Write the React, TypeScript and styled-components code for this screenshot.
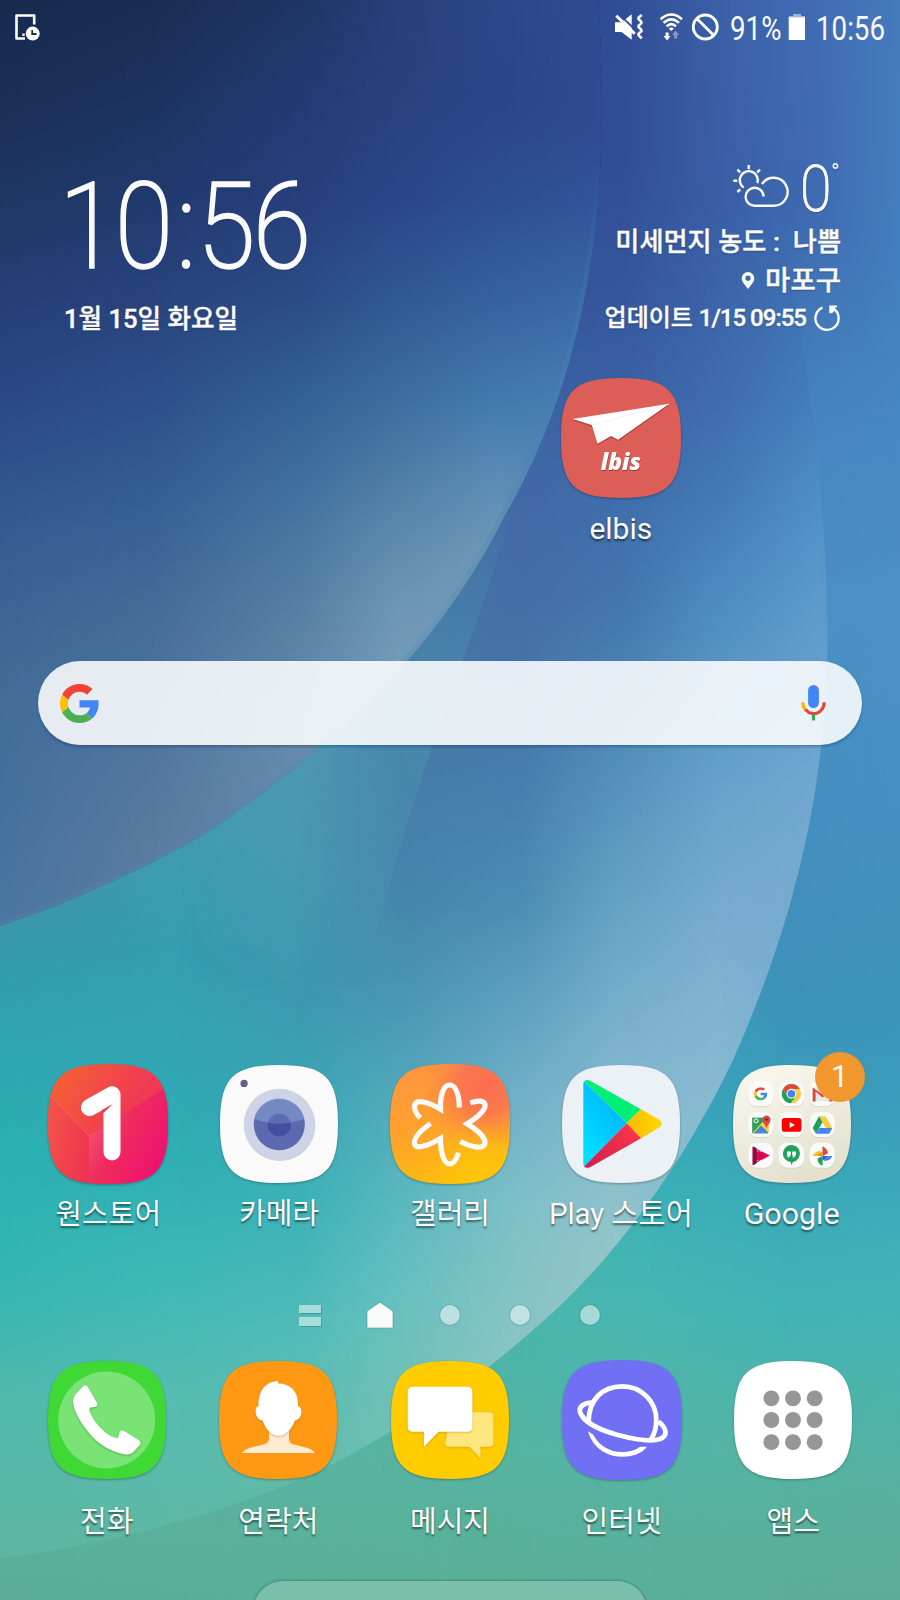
import React from "react";
import styled, { createGlobalStyle } from "styled-components";

const GlobalStyle = createGlobalStyle`
  html, body { margin: 0; padding: 0; }
  body { width: 900px; height: 1600px; overflow: hidden; }
  * { box-sizing: border-box; }
`;

const FONT = `Roboto, "Noto Sans CJK KR", sans-serif`;

/* ---------- Layout ---------- */

const Screen = styled.main`
  position: relative;
  width: 900px;
  height: 1600px;
  overflow: hidden;
  color: #fafafa;
  font-family: ${FONT};
`;

const WallpaperSvg = styled.svg`
  position: absolute;
  inset: 0;
`;

const Content = styled.div`
  position: relative;
  height: 100%;
  display: flex;
  flex-direction: column;
`;

const StatusBar = styled.header`
  height: 54px;
  flex-shrink: 0;
  padding: 0 13px 0 14px;
  display: flex;
  justify-content: space-between;
  align-items: center;
`;

const StatusGroup = styled.div<{ $before?: number; $after?: number }>`
  margin-left: ${(p) => p.$before ?? 0}px;
  margin-right: ${(p) => p.$after ?? 0}px;
  display: flex;
  align-items: center;
`;

const StatusText = styled.span<{ $width: number }>`
  width: ${(p) => p.$width}px;
  white-space: nowrap;
  font-size: 33px;
  line-height: 54px;
  transform: translateY(1.5px) scaleX(0.84);
  transform-origin: left center;
`;

const Widgets = styled.section`
  height: 286px;
  flex-shrink: 0;
  padding: 0 59px 0 64px;
  display: flex;
  justify-content: space-between;
`;

const ClockWidget = styled.div`
  display: flex;
  flex-direction: column;
  padding-top: 112px;
  text-shadow: 0 1px 2px rgba(0, 0, 0, 0.25);
`;

const ClockTime = styled.div`
  height: 122px;
  width: 240px;
  margin-left: -5px;
  white-space: nowrap;
  font-size: 120px;
  line-height: 122px;
  font-weight: 200;
  -webkit-text-stroke: 1.6px #fafafa;
  letter-spacing: -3px;
  transform: scaleX(0.885);
  transform-origin: left center;
`;

const ClockColon = styled.span`
  margin: 0 3.5px 0 6.5px;
`;

const ClockDate = styled.div`
  margin-top: 13px;
  font-size: 25.6px;
  line-height: 36px;
  font-weight: 500;
  -webkit-text-stroke: 0.4px #fafafa;
  white-space: nowrap;
`;

const WeatherWidget = styled.div`
  display: flex;
  flex-direction: column;
  align-items: flex-end;
  padding-top: 103px;
  text-shadow: 0 1px 2px rgba(0, 0, 0, 0.3);
`;

const WeatherTop = styled.div`
  height: 66px;
  display: flex;
  align-items: flex-start;

  > svg {
    margin-top: 7px;
  }
`;

const Temperature = styled.span`
  width: 31px;
  margin-left: 10px;
  font-size: 65px;
  line-height: 66px;
  font-weight: 200;
  -webkit-text-stroke: 0.9px #fafafa;
  transform: translateY(-1px) scaleX(0.88);
  transform-origin: left center;
`;

const Degree = styled.span`
  width: 10px;
  font-size: 23px;
  line-height: 24px;
  transform: translateY(4px);
`;

const WeatherLine = styled.div<{ $size: number; $height: number; $gap?: number }>`
  height: ${(p) => p.$height}px;
  display: flex;
  align-items: center;
  gap: ${(p) => p.$gap ?? 0}px;
  font-size: ${(p) => p.$size}px;
  line-height: ${(p) => p.$height}px;
  font-weight: 500;
  -webkit-text-stroke: 0.4px #fafafa;
  white-space: pre;
`;

const Tight = styled.span`
  letter-spacing: -1px;
`;

const AppRow = styled.section<{ $inset: number; $top: number; $height: number }>`
  height: ${(p) => p.$height}px;
  margin-top: ${(p) => p.$top}px;
  padding: 0 ${(p) => p.$inset}px;
  display: grid;
  grid-template-columns: repeat(5, 1fr);
  flex-shrink: 0;
`;

const AppCell = styled.div<{ $column?: number }>`
  grid-column: ${(p) => p.$column ?? "auto"};
  display: flex;
  flex-direction: column;
  align-items: center;
`;

const IconBox = styled.div`
  position: relative;
  height: 120px;
  display: flex;
  align-items: center;
`;

const AppSvg = styled.svg`
  display: block;
  overflow: visible;
  filter: drop-shadow(0 1.5px 1px rgba(0, 0, 0, 0.28));
`;

const AppLabel = styled.span<{ $gap: number; $size: number }>`
  margin-top: ${(p) => p.$gap}px;
  font-size: ${(p) => p.$size}px;
  line-height: 40px;
  white-space: nowrap;
  text-shadow: 0 1.5px 2px rgba(0, 0, 0, 0.5);
`;

const Badge = styled.span`
  position: absolute;
  left: 82px;
  top: -12px;
  width: 50px;
  height: 50px;
  border-radius: 50%;
  background: #f1972d;
  font-size: 31px;
  line-height: 50px;
  text-align: center;
`;

const SearchBar = styled.div`
  width: 824px;
  height: 84px;
  margin: 102px 0 0 38px;
  padding: 0 35px 0 22px;
  border-radius: 42px;
  background: rgba(255, 255, 255, 0.865);
  box-shadow: 0 2px 3px rgba(0, 30, 60, 0.28);
  display: flex;
  align-items: center;
  justify-content: space-between;
  flex-shrink: 0;
`;

const Pager = styled.nav`
  height: 30px;
  margin-top: 56px;
  display: flex;
  justify-content: center;
  flex-shrink: 0;
`;

const PagerItem = styled.span`
  width: 70px;
  height: 30px;
  display: flex;
  flex-direction: column;
  align-items: center;
  justify-content: center;
  gap: 4px;
`;

const Dot = styled.i`
  width: 20px;
  height: 20px;
  border-radius: 50%;
  background: rgba(255, 255, 255, 0.5);
  box-shadow: 0 0 1px 0.5px rgba(30, 90, 90, 0.35);
`;

const Bar = styled.i`
  width: 22px;
  height: 8.5px;
  background: rgba(255, 255, 255, 0.5);
  box-shadow: 0 0 1px 0.5px rgba(30, 90, 90, 0.3);
`;

const EdgeHandle = styled.div`
  width: 394px;
  height: 60px;
  margin: 39px auto 0;
  border-radius: 30px 30px 0 0;
  background: rgba(255, 255, 255, 0.2);
  box-shadow: 0 0 2px 1px rgba(30, 90, 80, 0.4);
  flex-shrink: 0;
`;

/* ---------- Wallpaper ---------- */

type Column = { x: number; stops: [number, string][] };

const leafColumns: Column[] = [
  { x: 0, stops: [[0, "#172a4e"], [100, "#1a2f58"], [200, "#1f3764"], [300, "#263f76"], [400, "#2b4886"], [500, "#31588f"], [600, "#3a6493"], [700, "#426d98"], [800, "#43709e"], [920, "#4a76a2"]] },
  { x: 150, stops: [[0, "#192d54"], [100, "#1c3360"], [200, "#213a6e"], [300, "#29437e"], [400, "#2d508b"], [500, "#345f93"], [600, "#426b98"], [700, "#4d739e"], [850, "#5a7ba0"]] },
  { x: 300, stops: [[0, "#1e3564"], [100, "#233b73"], [200, "#273f7c"], [300, "#2b4c86"], [400, "#326293"], [500, "#4273a0"], [600, "#557fa4"], [700, "#6389aa"], [780, "#668cae"]] },
  { x: 400, stops: [[0, "#27407a"], [100, "#29427e"], [200, "#2b4688"], [300, "#305a93"], [400, "#3c6f9f"], [500, "#5383a9"], [600, "#6c96b4"], [680, "#749db8"]] },
  { x: 500, stops: [[0, "#2e4788"], [100, "#2c4588"], [200, "#2d4f92"], [300, "#35639e"], [400, "#447aae"], [470, "#588bb5"], [560, "#7099b8"]] },
  { x: 600, stops: [[0, "#304b92"], [130, "#304b93"], [200, "#32549a"], [300, "#3969a8"], [400, "#4a80b2"]] },
];

const fieldColumns: Column[] = [
  { x: 0, stops: [[900, "#3d94aa"], [1000, "#30a0b0"], [1150, "#2bb0b3"], [1280, "#35b6b2"], [1400, "#50b9ad"], [1550, "#5cb5a0"]] },
  { x: 180, stops: [[800, "#439cb2"], [950, "#359db0"], [1150, "#2fadb4"], [1280, "#3fb9b6"], [1400, "#57bcb1"], [1540, "#5fb8a4"]] },
  { x: 300, stops: [[700, "#5198b4"], [850, "#4798b2"], [1000, "#3d98b0"], [1100, "#39a6b5"], [1200, "#3bb2b8"], [1350, "#54bdb8"], [1480, "#60bba8"]] },
  { x: 400, stops: [[640, "#4676a6"], [760, "#467ba8"], [900, "#4586ac"], [1000, "#4896b4"], [1100, "#53a9bb"], [1200, "#5ab8be"], [1300, "#68c0c0"], [1420, "#74c0b4"]] },
  { x: 520, stops: [[0, "#304b92"], [150, "#304b93"], [300, "#34569c"], [450, "#3f66a4"], [600, "#446ea6"], [700, "#4676a7"], [800, "#4880ae"], [900, "#4c8cb3"], [1000, "#5fa0c0"], [1100, "#72b0c8"], [1200, "#7fbfc8"], [1350, "#8ac5c3"]] },
  { x: 620, stops: [[0, "#314d94"], [150, "#314d95"], [300, "#35569d"], [400, "#3b62a5"], [500, "#3f6eac"], [600, "#4376ac"], [700, "#4d86b5"], [800, "#5893bd"], [900, "#66a2c4"], [1000, "#76adcc"], [1100, "#85b9cf"], [1250, "#92c6ca"]] },
  { x: 720, stops: [[0, "#3b60a8"], [200, "#395ea6"], [400, "#3f6cb0"], [500, "#447ab6"], [600, "#4e8cc0"], [700, "#5b99c5"], [800, "#6aa3cc"], [900, "#76aad0"], [1000, "#80b4d2"], [1100, "#88bad0"]] },
  { x: 820, stops: [[0, "#416db4"], [200, "#3f6bb2"], [300, "#4074b5"], [400, "#447fbd"], [500, "#508fc6"], [600, "#5c9acb"], [750, "#6ca6d0"], [850, "#76aad0"]] },
  { x: 900, stops: [[0, "#467abb"], [300, "#4480c0"], [600, "#4a90c6"]] },
];

const outerColumns: Column[] = [
  { x: 0, stops: [[1540, "#5bb19d"], [1600, "#5aad96"]] },
  { x: 450, stops: [[1340, "#4ab5aa"], [1450, "#56b4a1"], [1600, "#5ab097"]] },
  { x: 650, stops: [[1100, "#38a6b8"], [1200, "#3ab1b6"], [1300, "#48b7b3"], [1450, "#55b4a4"], [1600, "#5aaf98"]] },
  { x: 780, stops: [[280, "#4579bb"], [400, "#4682c0"], [600, "#4a8fc4"], [900, "#428fbd"], [1000, "#3d92b9"], [1150, "#38a5ba"], [1300, "#41b4b6"], [1450, "#55b4a4"], [1600, "#5bae97"]] },
  { x: 900, stops: [[280, "#4480c0"], [600, "#4b90c6"], [800, "#4690c2"], [950, "#3f92b9"], [1100, "#3a9bbb"], [1250, "#3fb0ba"], [1350, "#48b5b2"], [1480, "#58b1a0"], [1600, "#5cad96"]] },
];

const LEAF_EDGE =
  "M598 0 C602 60 603 110 600 170 C594 300 560 420 505 515 C440 645 340 745 200 837 C130 876 60 907 0 926";
const LEAF = `${LEAF_EDGE} V0 Z`;
const OUTER =
  "M775 200 C800 320 827 460 827.6 640 C826 790 795 920 733 1060 C695 1140 650 1205 612 1250 C575 1295 535 1330 490 1366 C430 1410 350 1458 300 1480 C200 1520 100 1545 0 1559 V1600 H900 V200 Z";
const RIDGE = "M520 480 C492 590 450 690 432 747 C408 815 385 900 362 990 L150 1000 L150 850 C280 780 390 690 450 480 Z";

function ColorField({ id, columns }: { id: string; columns: Column[] }) {
  return (
    <>
      {columns.map((col, i) => {
        const prev = columns[i - 1];
        return (
          <React.Fragment key={col.x}>
            <linearGradient id={`${id}-c${i}`} gradientUnits="userSpaceOnUse" x1="0" y1="0" x2="0" y2="1600">
              {col.stops.map(([y, color]) => (
                <stop key={y} offset={y / 1600} stopColor={color} />
              ))}
            </linearGradient>
            {prev && (
              <>
                <linearGradient id={`${id}-f${i}`} gradientUnits="userSpaceOnUse" x1={prev.x} y1="0" x2={col.x} y2="0">
                  <stop offset="0" stopColor="#fff" stopOpacity="0" />
                  <stop offset="1" stopColor="#fff" />
                </linearGradient>
                <mask id={`${id}-m${i}`} maskUnits="userSpaceOnUse" x="0" y="0" width="900" height="1600">
                  <rect width="900" height="1600" fill={`url(#${id}-f${i})`} />
                </mask>
              </>
            )}
            <rect
              width="900"
              height="1600"
              fill={`url(#${id}-c${i})`}
              mask={prev ? `url(#${id}-m${i})` : undefined}
            />
          </React.Fragment>
        );
      })}
    </>
  );
}

function Wallpaper() {
  return (
    <WallpaperSvg width="900" height="1600" viewBox="0 0 900 1600" aria-hidden>
      <defs>
        <clipPath id="leaf"><path d={LEAF} /></clipPath>
        <clipPath id="outer"><path d={OUTER} /></clipPath>
        <linearGradient id="fadeDown" gradientUnits="userSpaceOnUse" x1="0" y1="220" x2="0" y2="480">
          <stop offset="0" stopColor="#fff" stopOpacity="0" />
          <stop offset="1" stopColor="#fff" />
        </linearGradient>
        <mask id="outerFade" maskUnits="userSpaceOnUse" x="0" y="0" width="900" height="1600">
          <rect width="900" height="1600" fill="url(#fadeDown)" />
        </mask>
        <linearGradient id="ridge" gradientUnits="userSpaceOnUse" x1="180" y1="0" x2="400" y2="0">
          <stop offset="0" stopColor="#4a9ab4" stopOpacity="0" />
          <stop offset="1" stopColor="#4ea2b6" stopOpacity="0.32" />
        </linearGradient>
        <linearGradient id="ridgeFade" gradientUnits="userSpaceOnUse" x1="0" y1="480" x2="0" y2="990">
          <stop offset="0" stopColor="#fff" stopOpacity="0" />
          <stop offset="0.35" stopColor="#fff" stopOpacity="0.9" />
          <stop offset="0.55" stopColor="#fff" />
          <stop offset="0.8" stopColor="#fff" stopOpacity="0.6" />
          <stop offset="1" stopColor="#fff" stopOpacity="0" />
        </linearGradient>
        <mask id="ridgeMask" maskUnits="userSpaceOnUse" x="0" y="400" width="900" height="700">
          <rect y="400" width="900" height="700" fill="url(#ridgeFade)" />
        </mask>
        <linearGradient id="leafEdge" gradientUnits="userSpaceOnUse" x1="0" y1="160" x2="0" y2="927">
          <stop offset="0" stopColor="#4f8cc0" stopOpacity="0" />
          <stop offset="0.35" stopColor="#4580b4" stopOpacity="0.35" />
          <stop offset="0.6" stopColor="#5d92b4" stopOpacity="0.45" />
          <stop offset="1" stopColor="#4a7fa4" stopOpacity="0.55" />
        </linearGradient>
      </defs>
      <ColorField id="field" columns={fieldColumns} />
      <path d={RIDGE} fill="url(#ridge)" mask="url(#ridgeMask)" />
      <g clipPath="url(#outer)">
        <g mask="url(#outerFade)">
          <ColorField id="outerc" columns={outerColumns} />
        </g>
      </g>
      <g clipPath="url(#leaf)">
        <ColorField id="leafc" columns={leafColumns} />
        <path d={LEAF_EDGE} fill="none" stroke="url(#leafEdge)" strokeWidth="10" />
      </g>
    </WallpaperSvg>
  );
}

/* ---------- Icons ---------- */

const SQUIRCLE = "M60 0 C107 0 120 13 120 60 S107 120 60 120 S0 107 0 60 S13 0 60 0Z";

function Tile({ fill, size = 120, children }: { fill: string; size?: number; children?: React.ReactNode }) {
  return (
    <AppSvg width={size} height={size} viewBox="0 0 120 120">
      <path d={SQUIRCLE} fill={fill} />
      {children}
    </AppSvg>
  );
}

const Lifted = styled.path<{ $shade: string }>`
  filter: drop-shadow(0 1.5px 1px ${(p) => p.$shade});
`;

const LogoText = styled.text<{ $color: string }>`
  font-family: "Open Sans", sans-serif;
  font-size: 22.8px;
  font-weight: 800;
  font-style: italic;
  fill: ${(p) => p.$color};
  text-anchor: middle;
`;

const ElbisIcon = () => (
  <Tile fill="#dd5e57">
    <g transform="translate(0 1.5)" fill="#8d3434" opacity="0.6">
      <path d="M11.5 41 L108.3 25.7 L57 61.7 L50 58 L36.5 65.7 L30.7 47Z" />
    </g>
    <path d="M11.5 41 L108.3 25.7 L57 61.7 L50 58 L36.5 65.7 L30.7 47Z" fill="#fff" />
    <path d="M31 47 L108 26" stroke="#ececec" strokeWidth="0.7" />
    <LogoText $color="#963c3a" x="60.3" y="92.8">lbis</LogoText>
    <LogoText $color="#fff" x="59.8" y="91.5">lbis</LogoText>
  </Tile>
);

const OneStoreIcon = () => (
  <Tile fill="url(#oneTop)">
    <defs>
      <linearGradient id="oneTop" x1="0" y1="0" x2="1" y2="0.6">
        <stop offset="0" stopColor="#f4662f" /><stop offset="0.6" stopColor="#f13e50" /><stop offset="1" stopColor="#f02e5e" />
      </linearGradient>
      <linearGradient id="oneLeft" x1="0" y1="0.3" x2="1" y2="0.7">
        <stop offset="0" stopColor="#f45348" /><stop offset="1" stopColor="#f03352" />
      </linearGradient>
      <linearGradient id="oneRight" x1="0" y1="0.3" x2="0.8" y2="0.85">
        <stop offset="0" stopColor="#f35a76" /><stop offset="0.45" stopColor="#ef2c5c" /><stop offset="1" stopColor="#ee146e" />
      </linearGradient>
      <clipPath id="tile"><path d={SQUIRCLE} /></clipPath>
    </defs>
    <g clipPath="url(#tile)">
      <path d="M0 29 L41 72 V120 H0Z" fill="url(#oneLeft)" />
      <path d="M41 72 L120 22 V120 H41Z" fill="url(#oneRight)" />
      <path d="M2 31 L41 72" stroke="#f77d66" strokeWidth="0.8" opacity="0.7" />
    </g>
    <path d="M41.5 43.5 L64 30.8 V88" fill="none" stroke="#fff" strokeWidth="17" strokeLinecap="round" strokeLinejoin="round" />
    <path d="M55.5 49 L65 39.8 L54 46Z" fill="#f03a52" />
  </Tile>
);

const CameraIcon = () => (
  <Tile fill="#fafafa" size={118}>
    <circle cx="24.5" cy="18.7" r="3.7" fill="#5c618f" />
    <circle cx="60.8" cy="61.5" r="36.2" fill="#cfd0d8" />
    <circle cx="60.3" cy="60.3" r="36.2" fill="#ced3e6" />
    <circle cx="60.3" cy="60.6" r="26" fill="#5a69b0" />
    <circle cx="60.3" cy="60.6" r="12" fill="#4350a0" />
    <path d="M34.8 55 A26 26 0 0 1 85.8 55 Q60 64 34.8 55Z" fill="#7f96cc" opacity="0.7" />
    <path d="M48.8 58.5 A12 12 0 0 1 71.8 58.5 Q60 60.5 48.8 58.5Z" fill="#5264ac" opacity="0.7" />
  </Tile>
);

const GalleryIcon = () => (
  <Tile fill="url(#galBase)">
    <defs>
      <linearGradient id="galBase" x1="0.2" y1="0" x2="0.5" y2="1">
        <stop offset="0" stopColor="#ff9440" /><stop offset="0.5" stopColor="#ffa22c" /><stop offset="1" stopColor="#fdbd0c" />
      </linearGradient>
      <radialGradient id="galRed" cx="0.8" cy="0.18" r="0.55">
        <stop offset="0" stopColor="#fb6e50" /><stop offset="0.4" stopColor="#fb7350" stopOpacity="0.9" /><stop offset="1" stopColor="#fd8a40" stopOpacity="0" />
      </radialGradient>
      <radialGradient id="galYellow" cx="0.75" cy="0.95" r="0.45">
        <stop offset="0" stopColor="#ffc60a" /><stop offset="1" stopColor="#ffc60a" stopOpacity="0" />
      </radialGradient>
    </defs>
    <path d={SQUIRCLE} fill="url(#galRed)" />
    <path d={SQUIRCLE} fill="url(#galYellow)" />
    <g fill="none" stroke="#fafafa" strokeWidth="5.2">
      <path d="M69.3 43.5 C69.3 32 66 21 59.7 21 C53 21 50 32 50.5 45.2 C38 38 26 34.5 24.6 41.5 C24 45 26 49.5 30.2 54" />
      <path d="M40.5 59.5 C30 67 22.5 75 24.8 80.8 C27.5 86 40 80.5 50.5 74.5 C50.5 87 53.5 100 59.7 100 C63.5 100 66.5 95 68.5 88.8" />
      <path d="M80.3 38.9 C88 36 94 36.5 95 40.5 C96 45.5 88 53 77 59.8 C88 66.5 97 74.5 94.6 80.5 C92 85.5 80 83 70.3 77.5" />
    </g>
  </Tile>
);

const PlayIcon = () => (
  <Tile fill="#ecf1f5" size={118}>
    <defs>
      <linearGradient id="playBlue" x1="1" y1="0" x2="0.3" y2="1">
        <stop offset="0" stopColor="#00a8ff" /><stop offset="1" stopColor="#00dfff" />
      </linearGradient>
      <linearGradient id="playRed" x1="1" y1="0" x2="0" y2="1">
        <stop offset="0" stopColor="#ff3a44" /><stop offset="1" stopColor="#d11c50" />
      </linearGradient>
      <linearGradient id="playYellow"><stop offset="0" stopColor="#ffb800" /><stop offset="1" stopColor="#ffd900" /></linearGradient>
    </defs>
    <g transform="scale(1.017)">
      <path d="M22 102 Q24 104.5 28 102.8 L97 62.5 Q99.5 61 99 58" fill="#000" opacity="0.22" />
      <path d="M22.2 16.2 L64.7 58.3 L22.2 101.5 Q21.3 100.5 21.3 98.5 V19 Q21.3 17 22.2 16.2Z" fill="url(#playBlue)" />
      <path d="M22.2 16.2 Q24.5 14 28.5 16 L79 44.2 L64.7 58.3Z" fill="#00ef76" />
      <path d="M79 44.2 L97.5 54.8 Q102 58.5 97.5 62.3 L79 73.2 L64.7 58.3Z" fill="url(#playYellow)" />
      <path d="M22.2 101.5 Q24.5 103.7 28.5 101.7 L79 73.2 L64.7 58.3Z" fill="url(#playRed)" />
    </g>
  </Tile>
);

function GoogleG({ size }: { size: number }) {
  return (
    <svg width={size} height={size} viewBox="0 0 48 48">
      <path fill="#f44336" d="M24 9.5c3.54 0 6.71 1.22 9.21 3.6l6.85-6.85C35.9 2.38 30.47 0 24 0 14.62 0 6.51 5.38 2.56 13.22l7.98 6.19C12.43 13.72 17.74 9.5 24 9.5z" />
      <path fill="#4285f4" d="M47.5 24.55c0-1.57-.15-3.09-.38-4.55H24v9.02h12.94c-.58 2.96-2.26 5.48-4.78 7.18l7.73 6c4.51-4.18 7.61-10.36 7.61-17.65z" />
      <path fill="#ffc107" d="M10.53 28.59c-.48-1.45-.76-2.99-.76-4.59s.27-3.14.76-4.59l-7.98-6.19C.92 16.46 0 20.12 0 24c0 3.88.92 7.54 2.56 10.78l7.97-6.19z" />
      <path fill="#4caf50" d="M24 48c6.48 0 11.93-2.13 15.89-5.81l-7.73-6c-2.15 1.45-4.92 2.3-8.16 2.3-6.26 0-11.57-4.22-13.47-9.91l-7.98 6.19C6.51 42.62 14.62 48 24 48z" />
    </svg>
  );
}

const MicIcon = () => (
  <svg width="26" height="38" viewBox="0 0 26 38">
    <rect x="7.1" y="1" width="10.8" height="23" rx="5.4" fill="#4285f4" />
    <path d="M1.9 18.3 C1.9 22 3 24.6 5 26.4" fill="none" stroke="#f9b70b" strokeWidth="3.2" />
    <path d="M4.5 25.4 C8.6 31 16.6 31 20.6 25.6 C22.6 23.5 23.2 21 23.2 18.3" fill="none" stroke="#ea4335" strokeWidth="3.2" />
    <rect x="10.9" y="30.4" width="3.2" height="6" fill="#34a853" />
  </svg>
);

const MINI_POSITIONS = [15.5, 46.7, 78];

const FolderIcon = () => (
  <Tile fill="url(#folder)" size={118}>
    <defs>
      <linearGradient id="folder" x1="0.2" y1="0" x2="0.6" y2="1">
        <stop offset="0" stopColor="#f8f8ee" /><stop offset="1" stopColor="#e4e0cd" />
      </linearGradient>
    </defs>
    {MINI_POSITIONS.map((y) =>
      MINI_POSITIONS.map((x) => (
        <React.Fragment key={`${x}-${y}`}>
          <rect x={x} y={y + 2} width="25.5" height="25.5" rx="9" fill="#c9c6b8" opacity="0.6" />
          <rect x={x} y={y + 1} width="25.5" height="25.5" rx="9" fill="#fafafa" />
        </React.Fragment>
      )),
    )}
    <g transform="translate(21.3 22.5)"><GoogleG size={13.5} /></g>
    <g transform="translate(59.4 29.2)">
      <circle r="9.8" fill="#fbcd3d" />
      <path d="M-8.5 -4.9 A9.8 9.8 0 0 1 8.5 -4.9 L0 -4.6 L-4.2 2.4Z" fill="#dc4a3d" />
      <path d="M-8.5 -4.9 A9.8 9.8 0 0 0 -0.5 9.8 L4.2 2.6 L-4.2 2.4Z" fill="#1fa15d" />
      <circle r="5" fill="#f5f5f5" /><circle r="3.9" fill="#4285f4" />
    </g>
    <g transform="translate(81 23)">
      <path d="M0 0 H20 V14 H0Z" fill="#e8e8e8" /><path d="M0 0 V14 H3 V4 L10 10 L17 4 V14 H20 V0 L10 7Z" fill="#dc4a3d" />
    </g>
    <g transform="translate(19.5 51.5)">
      <path d="M0 2 H16 V18 H0Z" fill="#2f9e5b" />
      <path d="M0 18 L14 3 H17 V18 L9 10 L1.5 18Z" fill="#f2d15b" /><path d="M2 18 L9 11 L16 18Z" fill="#4a85ee" />
      <circle cx="4" cy="5.3" r="2" fill="none" stroke="#fff" strokeWidth="1" />
      <path d="M14.5 14 C14 9 10 8 10.3 4 A4.2 4.2 0 0 1 18.7 4 C19 8 15 9 14.5 14Z" fill="#de4b3b" /><circle cx="14.5" cy="4" r="1.5" fill="#8a2b24" />
    </g>
    <g transform="translate(49.6 54)">
      <rect width="20" height="14" rx="3" fill="#f00" /><path d="M8 4 L13.3 7 L8 10Z" fill="#fff" />
    </g>
    <g transform="translate(81 52)">
      <path d="M6.5 0 L13.2 0 L20 12 L13.3 12Z" fill="#fbcd3d" /><path d="M6.5 0 L10 6 L3.5 18 L0 12Z" fill="#1fa15d" />
      <path d="M7 12 H20 L16.8 18 H3.5Z" fill="#4285f4" />
    </g>
    <g transform="translate(20 82)">
      <path d="M0 1.5 L17.5 10 L0 19.5Z" fill="#e4004f" /><path d="M0 0.5 L4 2.5 V18 L0 20.3Z" fill="#7d1340" />
      <path d="M4.5 5.5 H14 M4.5 15 H14" stroke="#fff" strokeWidth="0.9" strokeDasharray="1.3 1.5" />
    </g>
    <g transform="translate(59.4 91)">
      <path d="M-8.7 -1 A8.7 8.7 0 1 1 2 7.5 L-0.5 11 V7.6 A8.7 8.7 0 0 1 -8.7 -1Z" fill="#1fa15d" />
      <path d="M-4.5 -3 H-0.7 V0.6 L-2.7 3 H-4 V0.5 H-4.5Z M0.8 -3 H4.6 V0.6 L2.6 3 H1.3 V0.5 H0.8Z" fill="#fff" />
    </g>
    <g transform="translate(91 92.5)">
      <path d="M0 0 V-10 Q5.5 -7 5.5 -2.5Z" fill="#dc4a3d" /><path d="M0 0 H10 Q8 5 2 5Z" fill="#4a85ee" />
      <path d="M0 0 V10 Q-5 8 -5 2.5Z" fill="#1fa15d" /><path d="M0 0 H-10 Q-7 -5 -2.5 -5Z" fill="#fbbd23" />
      <path d="M0 0 H-5 L0 -5Z" fill="#f08c28" /><path d="M0 0 H5 L0 5Z" fill="#2d5ec7" />
    </g>
  </Tile>
);

const PhoneIcon = () => (
  <Tile fill="#3fd835" size={118}>
    <circle cx="59.7" cy="60" r="49.3" fill="#7ae376" />
    <g transform="scale(1.017)">
      <Lifted $shade="rgba(0,90,0,0.35)" d="M35.5 24.8 Q38 23.3 40 26.2 L48.8 41.5 Q50.3 44.3 48 45.5 Q46 46.3 42.5 46.5 Q40.7 47.8 41.8 51 Q47 63 57.5 71.5 Q65 77.5 70 76.8 Q71 74.5 71.5 71.5 Q72.5 68.3 75.8 69.7 L90.5 79 Q93.5 81 92 84 L85 91.3 Q81.5 94.5 76 93.2 Q55 89 41 72 Q25.5 53 25 40 Q25 36 27.5 33.2Z" fill="#fff" />
    </g>
  </Tile>
);

const ContactsIcon = () => (
  <Tile fill="#ff9914" size={118}>
    <g transform="scale(1.017)">
      <path d="M50 65 V78 Q49.5 82 46 83 L33 86.3 Q25 88.5 23 92 H96 Q94 88.5 86 86.3 L73 83 Q70.3 82 70 78 V65Z" fill="#ffead2" />
      <Lifted $shade="rgba(150,80,0,0.35)" d="M59 20 L59.3 22.6 C70 22.3 79 30 79 42 V45 C83.5 46 83.5 54 79.5 58 Q77.5 59 76 59.5 C72 69.5 66 74.7 59.7 74.7 C53 74.7 47 69.5 43.5 59.5 Q41 59 39.7 58 C35.5 54 35.5 46 39.5 45 C39 32 45 20.5 59 20Z" fill="#fff" />
    </g>
  </Tile>
);

const MessageIcon = () => (
  <Tile fill="#ffcc00" size={118}>
    <g transform="scale(1.017)">
      <Lifted $shade="rgba(170,130,0,0.4)" d="M59 51.3 H98 Q102.3 51.3 102.3 55 V82 Q102.3 85.7 98 85.7 H89.5 V97.5 L78.5 85.7 H58 Q54.3 85.7 54.3 82Z" fill="#ffe67f" />
      <Lifted $shade="rgba(170,130,0,0.45)" d="M22 25.7 H76 Q81.4 25.7 81.4 31 V66 Q81.4 70.7 76 70.7 H47.5 L33 85.8 V70.7 H22 Q16.7 70.7 16.7 66 V31 Q16.7 25.7 22 25.7Z" fill="#fff" />
    </g>
  </Tile>
);

const InternetIcon = () => (
  <Tile fill="#7170f5">
    <g fill="none" stroke="#fff" strokeWidth="4.8">
      <path d="M26.6 61 C27 40 40 26.3 60.3 26.3 C80 26.3 94.3 42 94.3 60 C94.3 67 92.5 74 89 79.3" />
      <path d="M31 42.7 C22 42.5 16.5 46.5 18 52 C21 62 38 70 55 74.7 C72 79.3 90 81.8 98 79 C106 76 105 68.5 96.5 61.5" />
    </g>
    <path d="M26 71.3 C30 86 43 96.8 60 96.8 C71 96.8 80 93.5 85 86.8 H78 C73 90.5 67 92 60 92 C46 92 36.5 84.5 31 74.5Z" fill="#fff" />
  </Tile>
);

const AppsIcon = () => (
  <Tile fill="#fff" size={118}>
    {[38, 60, 82.5].map((cy) => [38, 60, 82].map((cx) => <circle key={`${cx}${cy}`} cx={cx} cy={cy} r="8.1" fill="#969696" />))}
  </Tile>
);

const DeviceClockIcon = () => (
  <svg width="28" height="30" viewBox="14 12 28 30">
    <path d="M34.2 24.5 V15.5 H16.5 V38.5 H25" fill="none" stroke="#fff" strokeWidth="2.6" strokeLinejoin="round" />
    <rect x="22.3" y="33.5" width="2.4" height="2.4" fill="#fff" />
    <circle cx="32.7" cy="33.6" r="7" fill="#fff" />
    <path d="M32.2 30 V34 H36.5" fill="none" stroke="#1a2f58" strokeWidth="1.8" />
  </svg>
);

const MuteVibrateIcon = () => (
  <svg width="30" height="30" viewBox="34 12 30 30">
    <path d="M35 22.3 H41.5 L51.7 14.3 V39.8 L41.5 32 H35Z" fill="#fff" />
    <path d="M40.3 15.4 L56.5 31" stroke="#31509a" strokeWidth="1.8" />
    <path d="M36.3 15.7 L54.7 33.7" stroke="#fff" strokeWidth="3" />
    <path d="M61.8 15 L58.6 17.6 Q58 18.6 59.2 19.8 L61 21.4 Q62 22.4 61 23.6 L59 25.4 Q58 26.6 59.2 27.8 L61 29.4 Q62 30.6 61 31.6 L59 33.4 Q58 34.6 59.2 35.8 L61.8 38.4" fill="none" stroke="#fff" strokeWidth="2.6" />
  </svg>
);

const WifiIcon = () => (
  <svg width="26" height="30" viewBox="78 12 26 30">
    <g fill="none" stroke="#fff" strokeWidth="2.6">
      <path d="M80.6 19.2 Q91.3 9.8 102 19.2" />
      <path d="M83.6 22.9 Q91.3 16 99 22.9" />
      <path d="M86.6 26.4 Q91.3 22 96 26.4" />
    </g>
    <path d="M88.7 28.4 Q91.3 26.4 93.9 28.4 L91.3 31Z" fill="#fff" />
    <path d="M85.6 32.5 H88.6 V36 H90.6 L87.1 40.6 L83.6 36 H85.6Z" fill="#fff" />
    <path d="M94.1 38.5 H97.1 V35 H99.1 L95.6 30.4 L92.1 35 H94.1Z" fill="#fff" opacity="0.4" />
  </svg>
);

const BlockedIcon = () => (
  <svg width="28" height="30" viewBox="111 12 28 30">
    <circle cx="125.3" cy="27" r="12" fill="none" stroke="#fff" strokeWidth="2.8" />
    <path d="M117 18.7 L133.6 35.3" stroke="#fff" strokeWidth="2.8" />
  </svg>
);

const BatteryIcon = () => (
  <svg width="18" height="30" viewBox="208 12 18 30">
    <path d="M213 14 H221 V16 H225 V18 H208.7 V16 H213Z" fill="#fff" opacity="0.5" />
    <path d="M208.7 17.3 H225 V40 H208.7Z" fill="#fff" />
  </svg>
);

const SunCloudIcon = () => (
  <svg width="58" height="44" viewBox="152 164 58 44" fill="none" stroke="#fafafa" strokeWidth="2.4">
    <path d="M163.7 187.6 A9 9 0 1 1 177.3 183" />
    <path d="M168.7 165 V169.3 M153.3 180.8 H157.3 M157.4 169.6 L160.2 172.4 M180 169.6 L177.2 172.4 M157.4 192 L160.2 189.4" />
    <path d="M182 184 A14 14 0 1 1 194 205.8 H175 A9 9 0 1 1 183.6 196.5" />
  </svg>
);

const PinIcon = () => (
  <svg width="14" height="19" viewBox="0 0 14 19">
    <path d="M7 1 A6.3 6.3 0 0 1 13.3 7.4 C13.3 11 9.5 14 7 18 C4.5 14 0.7 11 0.7 7.4 A6.3 6.3 0 0 1 7 1Z M7 4.6 A2.6 2.6 0 1 0 7 9.8 A2.6 2.6 0 1 0 7 4.6Z" fill="#fafafa" fillRule="evenodd" />
  </svg>
);

const RefreshIcon = () => (
  <svg width="28" height="28" viewBox="0 0 28 28">
    <path d="M9.5 3.6 A11.6 11.6 0 1 0 21.5 5.4" fill="none" stroke="#fafafa" strokeWidth="2.4" />
    <path d="M16.3 1.4 H24 V3.2 H21.8 L22.8 5.6 L19 9.2 L16.3 9.2Z" fill="#fafafa" />
  </svg>
);

const HomeMark = () => (
  <svg width="28" height="28" viewBox="0 0 28 28">
    <path d="M14 1.2 L27 10.2 V27 H1 V10.2Z" fill="#fafafa" stroke="#4c8f90" strokeOpacity="0.55" strokeWidth="1" />
  </svg>
);

/* ---------- Screen ---------- */

type App = { label: string; icon: React.ReactNode; column?: number; badge?: string; size?: number };

const mainApps: App[] = [
  { label: "원스토어", icon: <OneStoreIcon />, size: 28.7 },
  { label: "카메라", icon: <CameraIcon /> },
  { label: "갤러리", icon: <GalleryIcon /> },
  { label: "Play 스토어", icon: <PlayIcon />, size: 29.4 },
  { label: "Google", icon: <FolderIcon />, badge: "1", size: 30.4 },
];

const dockApps: App[] = [
  { label: "전화", icon: <PhoneIcon /> },
  { label: "연락처", icon: <ContactsIcon /> },
  { label: "메시지", icon: <MessageIcon /> },
  { label: "인터넷", icon: <InternetIcon /> },
  { label: "앱스", icon: <AppsIcon /> },
];

function AppItem({ app, gap }: { app: App; gap: number }) {
  return (
    <AppCell $column={app.column}>
      <IconBox>
        {app.icon}
        {app.badge && <Badge>{app.badge}</Badge>}
      </IconBox>
      <AppLabel $gap={gap} $size={app.size ?? 29}>{app.label}</AppLabel>
    </AppCell>
  );
}

export default function App() {
  return (
    <Screen>
      <GlobalStyle />
      <Wallpaper />
      <Content>
        <StatusBar>
          <DeviceClockIcon />
          <StatusGroup>
            <MuteVibrateIcon />
            <StatusGroup $before={14}><WifiIcon /></StatusGroup>
            <StatusGroup $before={7} $after={11}><BlockedIcon /></StatusGroup>
            <StatusText $width={58}>91%</StatusText>
            <BatteryIcon />
            <StatusGroup $before={10}><StatusText $width={71}>10:56</StatusText></StatusGroup>
          </StatusGroup>
        </StatusBar>

        <Widgets>
          <ClockWidget>
            <ClockTime>10<ClockColon>:</ClockColon>56</ClockTime>
            <ClockDate>1월 15일 화요일</ClockDate>
          </ClockWidget>
          <WeatherWidget>
            <WeatherTop>
              <SunCloudIcon />
              <Temperature>0</Temperature>
              <Degree>°</Degree>
            </WeatherTop>
            <WeatherLine $size={26.2} $height={38}>{"미세먼지 농도 :  나쁨"}</WeatherLine>
            <WeatherLine $size={27.5} $height={39} $gap={10}><PinIcon />마포구</WeatherLine>
            <WeatherLine $size={24} $height={36} $gap={7}>
              <span>업데이트 <Tight>1/15 09:55</Tight></span>
              <RefreshIcon />
            </WeatherLine>
          </WeatherWidget>
        </Widgets>

        <AppRow $inset={23} $top={38} $height={181}>
          <AppItem gap={11} app={{ label: "elbis", icon: <ElbisIcon />, column: 4, size: 30 }} />
        </AppRow>

        <SearchBar>
          <GoogleG size={39} />
          <MicIcon />
        </SearchBar>

        <AppRow $inset={23} $top={319} $height={180}>
          {mainApps.map((app) => <AppItem key={app.label} app={app} gap={10} />)}
        </AppRow>

        <Pager>
          <PagerItem><Bar /><Bar /></PagerItem>
          <PagerItem><HomeMark /></PagerItem>
          <PagerItem><Dot /></PagerItem>
          <PagerItem><Dot /></PagerItem>
          <PagerItem><Dot /></PagerItem>
        </Pager>

        <AppRow $inset={21} $top={30} $height={182}>
          {dockApps.map((app) => <AppItem key={app.label} app={app} gap={22} />)}
        </AppRow>

        <EdgeHandle />
      </Content>
    </Screen>
  );
}
